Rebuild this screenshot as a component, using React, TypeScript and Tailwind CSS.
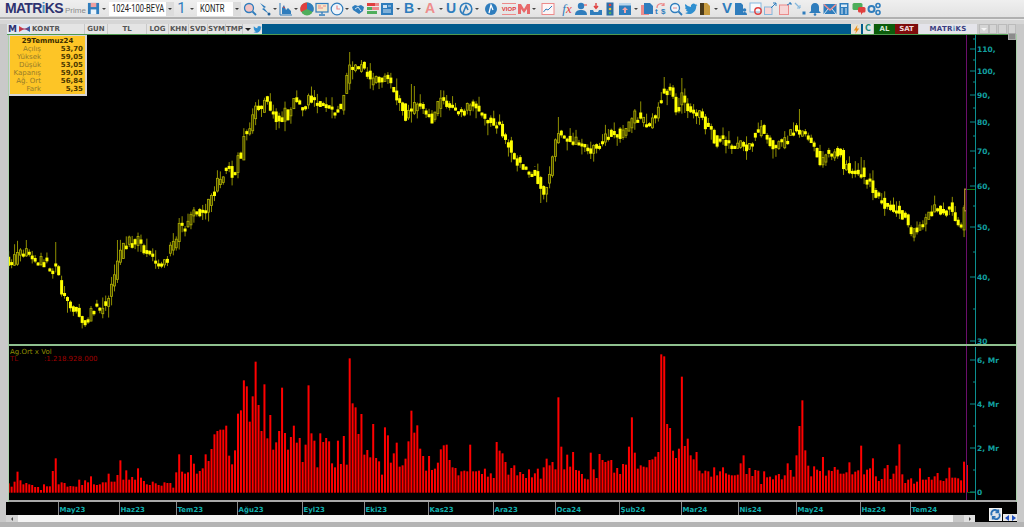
import { ReactNode } from "react"

const crop = (ox: number, oy: number, pts: number[]) => {
  const out: [number, number][] = []
  for (let i = 0; i < pts.length; i += 2) out.push([ox + pts[i] / 3, oy + pts[i + 1] / 3])
  return out
}

// price path traced from the chart
const trace: [number, number][] = [
  ...crop(0, 180, [26,245,40,250,52,215,70,215,90,225,105,240,125,240,140,255,150,275,165,250,175,290,185,330,202,365,218,380,235,400,255,425,270,395,280,380,300,390,320,365,335,325,345,290,352,250,365,210,380,185,400,192,415,180,430,205,445,230,465,245,480,265,492,255,510,210,528,175,540,135,560,140,575,100,590,100,605,105,625,70,645,20,660,0,684,-45,700,-5,720,-90]),
  ...crop(240, 40, [3,345,15,270,30,280,40,220,50,205,60,215,75,175,90,215,105,225,118,240,133,220,148,235,165,165,180,200,195,205,210,170,235,190,260,195,285,215,305,200,320,118,335,75,345,90,365,70,380,100,390,125,405,120,420,130,435,105,455,145,470,175,485,190,497,235,520,200,540,195,560,225,575,240,590,190,610,180,635,190,655,215,670,215,695,185,720,225,745,245,765,255,780,255]),
  ...crop(500, 60, [5,230,22,250,40,280,55,310,75,325,95,345,110,345,120,390,135,395,145,355,157,298,165,255,182,220,205,238,225,235,240,255,262,270,285,265,305,245,320,222,345,215,365,222,385,205,400,165,425,175,445,195,465,170,480,120,495,87,510,95,520,120,530,155,545,110,560,145,580,160,600,165,615,200,635,205,645,250,670,235,700,275,720,255,745,265,770,220]),
  ...crop(760, 90, [5,120,20,145,40,165,70,155,90,135,108,115,125,135,150,145,170,190,180,220,205,195,240,185,250,225,270,240,300,245,330,280,350,315,375,350,400,350,420,370,440,385,455,435,480,405,510,375,530,345,550,380,570,345,590,395,605,420,615,330]),
]

const yAt = (x: number) => {
  if (x <= trace[0][0]) return trace[0][1]
  for (let i = 1; i < trace.length; i++) {
    if (x <= trace[i][0]) {
      const [x0, y0] = trace[i - 1]
      const [x1, y1] = trace[i]
      return y0 + ((y1 - y0) * (x - x0)) / (x1 - x0)
    }
  }
  return trace[trace.length - 1][1]
}

// volume bar tops, read off the lower pane
const volTops = [
  ...[445,455,440,410,436,448,444,448,450,456,456,465,448,454,454,408,370,448,442,444,455,453,454,455,434,450,436,442,424,448,450,448,442,442,416,440,440,420,376,434,406,434,426,434,400,428,438,448,450,440,445,450,452,442,444,444,458,412,358,410,416,412,360,386,416,408,400,358,378,342,298,288,284,284,272,362,388,346,236,226,136,154,260,184,80,210,288,148,310,240,344,322,288,158,294,344,306,272].map((u) => 335 + u / 3),
  ...[278,264,336,284,106,250,272,352,250,276,264,274,340,352,272,342,258,344,25,160,172,252,192,314,300,322,222,324,334,374,232,256,338,310,278,350,346,326,274,182,248,226,296,318,362,318,360,356,338,298,286,284,330,352,354,376,364,362,364,284,364,364,362,372,356,380,370,384,276,302,310,336,374,354,346,376,366,372,384,358,382,370,356,386,352,326,346].map((u) => 350 + u / 3),
  ...[336,358,142,290,358,314,350,306,360,362,372,386,388,308,358,384,312,330,336,332,330,368,354,372,342,344,290,202,308,356,346,350,352,330,328,320,306,13,19,222,234,302,324,296,80,288,266,316,328,306,362,370,362,364,380,352,376,364,352,370,374,376,376,374,340,316,372,354,378,360,362,402,364,382,380,388,376,372,388,376,340,360,380,316,228].map((u) => 350 + u / 3),
  ...[196,346,392,424,394,404,408,366,422,406,408,396,404,416,416,412,382,418,410,406,332,418,404,400,370,424,438,432,400,390,432,416,392,328,418,444,434,430,446,440,400,434,434,426,434,424,414,436,438,430,398,428,428,430,436,380,390].map((u) => 335 + u / 3),
]

const barX = (i: number) => 8.7 + (i * (967 - 8.7)) / (volTops.length - 1)

let seed = 7
const rnd = () => {
  seed = (seed * 16807) % 2147483647
  return seed / 2147483647
}

const tallWicks: [number, number, "h" | "l"][] = [
  [55, 242, "h"], [84, 327, "l"], [118, 240, "h"], [349, 52, "h"], [362, 60, "h"], [411, 84, "h"],
  [414, 86, "h"], [542, 203, "l"], [536, 167, "l"], [558, 117, "h"], [663, 77, "h"], [681, 78, "h"], [799, 109, "h"], [860, 157, "h"],
]

const candles = volTops.map((_, i) => {
  const x = barX(i)
  const open = yAt(x - 2.9) + (rnd() - 0.5) * 9
  const close = yAt(x) + (rnd() - 0.5) * 9
  const top = Math.min(open, close) - rnd() * 1.5
  let bot = Math.max(open, close) + rnd() * 1.5
  if (bot - top < 3) bot = top + 3
  let hi = top - rnd() * rnd() * 14
  let lo = bot + rnd() * rnd() * 12
  for (const [wx, wy, k] of tallWicks) {
    if (Math.abs(wx - x) < 1.5) {
      if (k === "h") hi = wy
      else lo = wy
    }
  }
  // most short rising bars still read as solid yellow in the picture
  return { x, top, bot, hi, lo, up: close < open && bot - top > 5 }
})
candles[candles.length - 1] = { x: 965.5, top: 189, bot: 211, hi: 189, lo: 211, up: true }

const priceTicks: [number, string][] = [
  [49, "110,"], [71, "100,"], [95, "90,"], [122, "80,"], [151, "70,"], [186, "60,"], [227, "50,"], [277, "40,"], [341, "30"],
]
const priceMinor = [39, 60, 82, 108, 136, 168, 206, 252, 309]

const months: [number, string][] = [
  [58, "May23"], [119, "Haz23"], [176, "Tem23"], [237, "Ağu23"], [302, "Eyl23"], [364, "Eki23"], [428, "Kas23"],
  [493, "Ara23"], [555, "Oca24"], [619, "Şub24"], [681, "Mar24"], [738, "Nis24"], [796, "May24"], [860, "Haz24"], [910, "Tem24"],
]

const rows = [
  ["Açılış", "53,70"],
  ["Yüksek", "59,05"],
  ["Düşük", "53,05"],
  ["Kapanış", "59,05"],
  ["Ağ. Ort", "56,84"],
  ["Fark", "5,35"],
]

const BLUE = "#2f7dbd"
const PINK = "#ec8a8a"
const RED = "#e0403f"
const GREEN = "#4fae5c"

const Ic = ({ children }: { children: ReactNode }) => (
  <svg viewBox="0 0 14 14" className="w-[14px] h-[14px]">
    {children}
  </svg>
)

const Letter = ({ c, className }: { c: string; className: string }) => (
  <span className={`w-[14px] h-[14px] flex items-center justify-center font-['Liberation_Sans',sans-serif] font-bold ${className}`}>{c}</span>
)

const Caret = ({ className }: { className: string }) => (
  <span className={`w-[6px] h-[14px] flex items-center justify-center ${className}`}>
    <span className="w-0 h-0 border-x-[2px] border-x-transparent border-t-[2px] border-t-[#444]" />
  </span>
)

const Bird = ({ size = "w-[14px] h-[14px]" }: { size?: string }) => (
  <svg viewBox="0 0 24 24" className={size} fill="#2f8fd0">
    <path d="M23 5c-.8.4-1.700.6-2.600.7.900-.6 1.600-1.400 2-2.500-.9.500-1.900.9-2.900 1.100A4.500 4.500 0 0 0 11.800 8.400C8 8.200 4.600 6.400 2.400 3.600c-1.200 2-.6 4.700 1.400 6-.7 0-1.400-.2-2-.6 0 2.200 1.500 4.100 3.600 4.500-.7.200-1.400.2-2 .1.600 1.800 2.300 3.100 4.200 3.100A9.100 9.100 0 0 1 1 18.600 12.800 12.800 0 0 0 8 20.700c8.400 0 13.200-7.100 12.900-13.500.9-.6 1.600-1.400 2.100-2.200z" />
  </svg>
)

const tools: { node: ReactNode; gap: string }[] = [
  { gap: "ml-[2px]", node: <Ic><circle cx="6" cy="6" r="4.500" fill="#f3c3c3" stroke={BLUE} strokeWidth="1.300" /><path d="M9.500 9.500 13 13" stroke={BLUE} strokeWidth="1.800" /></Ic> },
  { gap: "ml-[1px]", node: <Ic><path d="M2 1l6 4-2 1 5 6-7-5 2-1z" fill={BLUE} /><circle cx="11" cy="12" r="1.500" fill="#1e5f99" /></Ic> },
  { gap: "", node: <Caret className="" /> },
  { gap: "ml-[1px]", node: <Ic><path d="M1 1v12h12" stroke={BLUE} fill="none" /><path d="M3 12V6l2-3 2 5 2-2 3 3v3z" fill={BLUE} /><path d="M4 5l2 1" stroke={RED} /></Ic> },
  { gap: "", node: <Caret className="" /> },
  { gap: "ml-[1px]", node: <Ic><circle cx="7" cy="7" r="6.500" fill={GREEN} /><path d="M7 7V.5A6.500 6.500 0 0 1 13 10z" fill="#2f7dbd" /><path d="M7 7 1 10A6.500 6.500 0 0 1 7 .5z" fill={RED} /></Ic> },
  { gap: "ml-[1px]", node: <Ic><rect x="1" y="1.500" width="12" height="8.500" fill="#f5e6c8" stroke={BLUE} strokeWidth="1.200" /><path d="M3 4h3M3 6h5M8 4h3" stroke={PINK} /><path d="M7 10v2M4 13h6" stroke={BLUE} strokeWidth="1.300" /></Ic> },
  { gap: "ml-[1px]", node: <Ic><circle cx="7" cy="7" r="5.800" fill="#eef5fb" stroke={BLUE} strokeWidth="1.200" /><path d="M7 3.500V7h3" stroke={PINK} strokeWidth="1.200" fill="none" /></Ic> },
  { gap: "", node: <Caret className="" /> },
  { gap: "ml-[1px]", node: <Ic><path d="M1 5l3-2 3 1 3-1 3 2-1 4-4 3-3-2-3-2z" fill={BLUE} /><path d="M4 7l3-2 3 4" stroke="#cfe3f3" fill="none" /></Ic> },
  { gap: "ml-[1px]", node: <Ic><rect x="1" y="1" width="8" height="3" fill={RED} /><rect x="9" y="1" width="4" height="3" fill={PINK} /><rect x="1" y="5" width="5" height="3" fill={GREEN} /><rect x="6" y="5" width="7" height="3" fill={PINK} /><rect x="1" y="9" width="10" height="3" fill={GREEN} /></Ic> },
  { gap: "", node: <Ic><rect x="1" y="1" width="12" height="12" fill={BLUE} /><rect x="3" y="3" width="4" height="3" fill="#cfe3f3" /><path d="M8 4h3M3 8h8M3 10h8" stroke="#cfe3f3" /></Ic> },
  { gap: "ml-[1px]", node: <Caret className="" /> },
  { gap: "ml-[1px]", node: <Letter c="B" className="text-[14px] text-[#2f7dbd]" /> },
  { gap: "", node: <Caret className="" /> },
  { gap: "ml-[1px]", node: <Letter c="A" className="text-[14px] text-[#ee8d8d]" /> },
  { gap: "ml-[1px]", node: <Caret className="" /> },
  { gap: "", node: <Letter c="U" className="text-[14px] text-[#2f7dbd]" /> },
  { gap: "ml-[1px]", node: <Ic><circle cx="7" cy="7" r="5.800" fill="none" stroke={BLUE} strokeWidth="1.600" /><path d="M4 11l3-7 2 4" stroke={BLUE} strokeWidth="1.600" fill="none" /></Ic> },
  { gap: "ml-[1px]", node: <Caret className="" /> },
  { gap: "ml-[4px]", node: <Ic><circle cx="7" cy="7" r="6" fill={BLUE} /><path d="M5 11l2-8 2 5" stroke="#fff" strokeWidth="1.300" fill="none" /></Ic> },
  { gap: "ml-[4px]", node: <span className="w-[14px] h-[12px] mt-[1px] border-y border-[#ec8a8a] flex items-center justify-center font-['Liberation_Sans',sans-serif] font-bold text-[6px] text-[#e0403f]">VIOP</span> },
  { gap: "ml-[1px]", node: <Ic><path d="M1 12V2h3l3 5 3-5h3v10h-3V7L7 11 4 7v5z" fill="#e8696a" /></Ic> },
  { gap: "", node: <Caret className="" /> },
  { gap: "ml-[4px]", node: <Ic><rect x="1" y="1.500" width="12" height="11" fill="#fdf5f5" stroke={PINK} /><path d="M2.500 10 5 7l2 1 4-4" stroke={BLUE} fill="none" /></Ic> },
  { gap: "ml-[5px]", node: <span className="w-[14px] h-[14px] flex items-center justify-center font-['Liberation_Serif',serif] italic text-[13px]"><span className="text-[#2f7dbd]">f</span><span className="text-[#e0403f]">x</span></span> },
  { gap: "", node: <Ic><circle cx="7" cy="4" r="3.200" fill={BLUE} /><path d="M1 13c0-4 3-5 6-5s6 1 6 5z" fill={BLUE} /><path d="M10 3h3" stroke={RED} /></Ic> },
  { gap: "ml-[1px]", node: <Ic><path d="M7 1v5M5 4l2 2.500L9 4" stroke={RED} strokeWidth="1.400" fill="none" /><path d="M1 8h3l1 2h4l1-2h3v5H1z" fill={BLUE} /></Ic> },
  { gap: "", node: <Ic><rect x="3.500" y="0.500" width="7" height="13" fill="#2d6fa8" /><circle cx="7" cy="3" r="1.300" fill={RED} /><circle cx="7" cy="7" r="1.300" fill="#f2c230" /><circle cx="7" cy="11" r="1.300" fill={GREEN} /></Ic> },
  { gap: "ml-[1px]", node: <Ic><rect x="1" y="1" width="12" height="12" fill={BLUE} /><rect x="1" y="1" width="12" height="2.500" fill="#bcd7ec" /><path d="M7 5l3 3H8v3H6V8H4z" fill="#f4a5a5" /></Ic> },
  { gap: "ml-[1px]", node: <Caret className="" /> },
  { gap: "ml-[1px]", node: <Ic><path d="M1 3h8v10H1z" fill={PINK} /><path d="M4 1h6l3 3v8H4z" fill={BLUE} /></Ic> },
  { gap: "", node: <span className="block w-[14px] h-[14px] relative font-['Liberation_Sans',sans-serif] font-bold text-[8px] leading-none"><svg viewBox="0 0 14 14" className="absolute left-0 top-0 w-[14px] h-[14px]"><path d="M3 6a4 4 0 0 1 7-3M10 1v2.500H7.500" stroke={PINK} strokeWidth="1.200" fill="none" /></svg><span className="absolute left-[1px] top-[6px] text-[#2f7dbd]">t</span><span className="absolute left-[7px] top-[6px] text-[#2f7dbd]">$</span></span> },
  { gap: "ml-[1px]", node: <Ic><circle cx="6" cy="6" r="4.500" fill="#eef5fb" stroke={BLUE} strokeWidth="1.300" /><path d="M9.500 9.500 13 13" stroke={BLUE} strokeWidth="1.800" /><path d="M4 6h4" stroke={PINK} /></Ic> },
  { gap: "ml-[1px]", node: <Bird /> },
  { gap: "", node: <Ic><path d="M2 1h7l3 3v9H2z" fill="#c79b3f" /><path d="M2 1h4v12H2z" fill="#4a3a1a" /></Ic> },
  { gap: "ml-[1px]", node: <Caret className="" /> },
  { gap: "ml-[1px]", node: <Letter c="V" className="text-[15px] text-[#2f7dbd]" /> },
  { gap: "", node: <Ic><path d="M1 1h6l2 2v10H1z" fill={BLUE} /><circle cx="10.500" cy="8" r="1.800" fill={BLUE} /><path d="M8 13c0-2 1-3 2.500-3s2.500 1 2.500 3z" fill={BLUE} /></Ic> },
  { gap: "ml-[1px]", node: <Ic><rect x="1" y="1" width="11" height="9" fill="#f6fafd" stroke="#86b8dd" /><circle cx="9" cy="9" r="3.200" fill="none" stroke={RED} strokeWidth="1.400" /></Ic> },
  { gap: "", node: <Ic><rect x="1.500" y="5" width="7.500" height="7.500" fill="#f6d6d6" stroke="#86b8dd" /><path d="M8 6l5-5M10 1h3v3" stroke={BLUE} fill="none" /></Ic> },
  { gap: "ml-[1px]", node: <Ic><rect x="1.500" y="3" width="9" height="9.500" fill="#f6d6d6" stroke={PINK} /><path d="M9 3l4-2" stroke={BLUE} /><path d="M11 1h2v2" stroke={BLUE} fill="none" /></Ic> },
  { gap: "ml-[1px]", node: <Ic><path d="M2 1l5 5" stroke="#86b8dd" strokeWidth="1.200" /><path d="M4 6h3V3" stroke="#86b8dd" fill="none" /><rect x="9.500" y="9.500" width="3" height="3" fill={BLUE} /></Ic> },
  { gap: "ml-[1px]", node: <Ic><path d="M7 1c-2.500 0-4 2-4 4v4l-2 2h12l-2-2V5c0-2-1.500-4-4-4z" fill={BLUE} /><circle cx="7" cy="12.500" r="1.300" fill={BLUE} /></Ic> },
  { gap: "ml-[1px]", node: <Ic><rect x="0.500" y="2" width="13" height="10" fill={BLUE} /><path d="M1 2.500 7 8l6-5.500" stroke="#f08f8f" strokeWidth="1.500" fill="none" /><path d="M1 12l4-5M13 12 9 7" stroke="#cfe3f3" /></Ic> },
  { gap: "", node: <Ic><rect x="2.500" y="1" width="9" height="12" fill={BLUE} /><rect x="4" y="2.500" width="6" height="2.500" fill="#dcebf7" /><path d="M4 7h2M8 7h2M4 9h2M8 9h2M4 11h2M8 11h2" stroke="#dcebf7" /></Ic> },
  { gap: "ml-[1px]", node: <Ic><rect x="0.500" y="1" width="10" height="7" rx="1.500" fill={GREEN} /><rect x="6" y="5" width="7.500" height="5.500" rx="1.500" fill={RED} /><path d="M9 10v3l2-3z" fill={RED} /></Ic> },
  { gap: "ml-[1px]", node: <Ic><circle cx="4.500" cy="7" r="3" fill="none" stroke={BLUE} strokeWidth="2" /><circle cx="11" cy="3.500" r="2" fill="none" stroke={BLUE} strokeWidth="1.600" /><circle cx="11" cy="10.500" r="2" fill="none" stroke={BLUE} strokeWidth="1.600" /></Ic> },
]

const Dropdown = ({ w, text }: { w: string; text: string }) => (
  <div className="flex h-[14px] items-center">
    <div className={`${w} h-[14px] bg-white overflow-hidden pl-[3px] font-['Roboto',sans-serif] text-[10px] leading-[14px] text-[#222]`}>
      <div className="whitespace-nowrap origin-left scale-x-[0.76]">{text}</div>
    </div>
    <div className="w-[8px] h-[14px] bg-[#dcdcdc] flex items-center justify-center">
      <span className="w-0 h-0 border-x-[2px] border-x-transparent border-t-[2px] border-t-[#333]" />
    </div>
  </div>
)

const Toolbar = () => (
  <div className="h-[17px] bg-gradient-to-b from-[#efefef] to-[#e2e2e2] flex items-center pl-[5px] shrink-0">
    <div className="w-[60px] font-['Liberation_Sans',sans-serif] font-bold text-[14px] tracking-[-0.7px] text-[#2e3270] whitespace-nowrap">
      MATR<span className="text-[#4c8ec2]">i</span>KS
    </div>
    <div className="w-[22px] pt-[4px] font-['Liberation_Sans',sans-serif] text-[8px] text-[#8a8a8a]">Prime</div>
    <svg viewBox="0 0 14 14" className="w-[13px] h-[13px]">
      <path d="M1 1h12v12H1z" fill="#2f7dbd" />
      <rect x="4" y="1" width="6" height="4.500" fill="#f0a0a0" />
      <rect x="4" y="8" width="6" height="5" fill="#eaf3fa" />
    </svg>
    <Caret className="ml-[1px]" />
    <div className="w-[2px]" />
    <Dropdown w="w-[57px]" text="1024-100-BEYA" />
    <span className="w-[15px] text-center font-['Roboto',sans-serif] text-[15px] leading-none text-[#2f7dbd]">1</span>
    <Caret className="" />
    <div className="w-[2px]" />
    <Dropdown w="w-[36px]" text="KONTR" />
    {tools.map((t, i) => (
      <div key={i} className={`shrink-0 ${t.gap}`}>
        {t.node}
      </div>
    ))}
  </div>
)

const tabs: [string, string][] = [
  ["GUN", "w-[22px]"],
  ["TL", "w-[38px]"],
  ["LOG", "w-[21px]"],
  ["KHN", "w-[19px]"],
  ["SVD", "w-[18px]"],
  ["SYM", "w-[17px]"],
  ["TMP", "w-[16px]"],
]

const Tab = ({ label, w }: { label: string; w: string }) => (
  <div className={`${w} h-[10px] mr-[1px] bg-[#e4e4e4] text-center text-[7px] leading-[10px] font-bold text-[#555]`}>{label}</div>
)

const TitleBar = () => (
  <div className="h-[10px] flex ml-[7px] mr-[8px] font-['DejaVu_Sans',sans-serif] shrink-0">
    <div className="w-[11px] h-[10px] bg-[#dfe8f2] text-center text-[9px] leading-[10px] font-bold text-[#2e3270]">M</div>
    <svg viewBox="0 0 13 10" className="w-[13px] h-[10px] bg-[#dfe8f2]">
      <path d="M1 2l5 3-5 3z" fill="#d8403f" />
      <path d="M12 2 7 5l5 3z" fill="#2f5fa8" />
      <path d="M2 5h9" stroke="#a03060" />
    </svg>
    <div className="w-[53px] h-[10px] mr-[1px] bg-[#e4e4e4] pl-[1px] text-[7px] leading-[10px] font-bold tracking-[0.2px] text-[#555]">KONTR</div>
    {tabs.map(([l, w]) => (
      <Tab key={l} label={l} w={w} />
    ))}
    <div className="w-[9px] h-[10px] bg-[#e4e4e4] flex items-center justify-center">
      <span className="w-0 h-0 border-x-[3px] border-x-transparent border-t-[3px] border-t-[#222]" />
    </div>
    <div className="w-[10px] h-[10px] bg-[#e4e4e4] flex items-center justify-center">
      <Bird size="w-[9px] h-[9px]" />
    </div>
    <div className="flex-1 bg-[#005a8c]" />
    <div className="w-[10px] h-[10px] bg-[#e4e0d4] flex items-center justify-center">
      <svg viewBox="0 0 10 10" className="w-[9px] h-[9px]">
        <path d="M6 0 2 6h2.500L3.500 10 8 4H5.500z" fill="#e8901c" />
      </svg>
    </div>
    <div className="w-[2px] bg-[#005a8c]" />
    <div className="w-[10px] h-[10px] bg-[#dfe8e4] text-center text-[8px] leading-[10px] font-bold text-[#1f8a7a]">C</div>
    <div className="w-[21px] h-[10px] ml-[1px] bg-[#0b5c0b] text-center text-[7px] leading-[10px] font-bold text-[#d8e8d8]">AL</div>
    <div className="w-[23px] h-[10px] bg-[#7e0c0c] text-center text-[7px] leading-[10px] font-bold text-[#efdada]">SAT</div>
    <div className="w-[58px] h-[10px] ml-[1px] bg-[#e4e4ea] text-center text-[7px] leading-[10px] font-bold tracking-[0.3px] text-[#3a3c80]">
      MATR<span className="text-[#4c8ec2]">i</span>KS
    </div>
    <div className="w-[10px] h-[10px] ml-[2px] bg-[#d4d4d4] border border-[#bbb] flex items-center justify-center">
      <span className="w-0 h-0 border-x-[3px] border-x-transparent border-t-[3px] border-t-[#f4f4f4]" />
    </div>
    <div className="w-[8px] h-[10px] bg-[#d4d4d4] border border-[#bbb]" />
    <div className="w-[9px] h-[10px] ml-[1px] bg-[#d4d4d4] border border-[#bbb]" />
    <div className="w-[8px] h-[10px] ml-[1px] bg-[#d4d4d4] border border-[#bbb]" />
  </div>
)

const InfoBox = () => (
  <div className="absolute left-[8px] top-[35px] w-[79px] h-[61px] bg-[#fdc526] border-2 border-t-[1px] border-[#d6d6d6] font-['DejaVu_Sans',sans-serif] text-[7px] leading-[8px] pt-[1px]">
    <div className="h-[8px] text-center font-bold text-[#3a2c00]">29Temmuz24</div>
    {rows.map(([k, v]) => (
      <div key={k} className="h-[8px] flex">
        <span className="w-[31px] text-right text-[#977c2a] whitespace-nowrap">{k}</span>
        <span className="flex-1 text-right pr-[2px] font-bold text-[#4a3800]">{v}</span>
      </div>
    ))}
  </div>
)

const axisText = { fontFamily: "'DejaVu Sans', sans-serif", fontSize: 7.5 }

const PricePane = () => (
  <svg viewBox="8 35 1008 309" className="w-[1008px] h-[309px] bg-black block">
    {candles.map((c, i) => (
      <g key={i}>
        <line x1={c.x} x2={c.x} y1={c.hi} y2={c.lo} stroke="#8f8f00" strokeWidth="1" />
        {i === candles.length - 1 ? (
          <rect x={c.x - 1} y={c.top} width="2" height={c.bot - c.top} fill="#4a3000" stroke="#a87f30" />
        ) : c.up ? (
          <rect x={c.x - 1} y={c.top} width="2" height={c.bot - c.top} fill="#3a3a00" stroke="#b0b000" strokeWidth="0.800" />
        ) : (
          <rect x={c.x - 1.500} y={c.top} width="3" height={c.bot - c.top} fill="#ffff00" />
        )}
      </g>
    ))}
    <line x1="966.500" x2="966.500" y1="35" y2="344" stroke="#6b0f6b" />
    <line x1="967" x2="975" y1="189.500" y2="189.500" stroke="#0f7a0f" />
    <line x1="975.500" x2="975.500" y1="35" y2="344" stroke="#0b8f8f" />
    {priceTicks.map(([y, t]) => (
      <g key={t}>
        <line x1="970" x2="975" y1={y} y2={y} stroke="#0b8f8f" />
        <text x="977" y={y + 3} fill="#12a0a0" fontWeight="600" style={axisText}>{t}</text>
      </g>
    ))}
    {priceMinor.map((y) => (
      <line key={y} x1="973" x2="975" y1={y} y2={y} stroke="#0b8f8f" />
    ))}
  </svg>
)

const VolumePane = () => (
  <svg viewBox="8 346 1008 154" className="w-[1008px] h-[154px] bg-black block">
    <text x="10" y="354" fill="#8f8f00" style={{ ...axisText, fontSize: 7 }}>Ag.Ort x Vol</text>
    <text x="10" y="361" fill="#8a0000" style={{ ...axisText, fontSize: 7 }}>TL</text>
    <text x="44" y="361" fill="#a00000" style={{ ...axisText, fontSize: 7 }}>:1.218.928.000</text>
    {volTops.map((t, i) => (
      <rect key={i} x={barX(i) - 1} y={t} width="2" height={492.700 - t} fill="#ff0000" />
    ))}
    <line x1="966.500" x2="966.500" y1="346" y2="500" stroke="#6b0f6b" />
    <line x1="967" x2="975" y1="492.500" y2="492.500" stroke="#0f5a0f" />
    <line x1="975.500" x2="975.500" y1="347" y2="500" stroke="#0b8f8f" />
    {[[360, "6, Mr"], [404, "4, Mr"], [448, "2, Mr"], [492, "0"]].map(([y, t]) => (
      <g key={t}>
        <line x1="970" x2="975" y1={Number(y)} y2={Number(y)} stroke="#0b8f8f" />
        <text x="977" y={Number(y) + 3} fill="#12a0a0" fontWeight="600" style={axisText}>{t}</text>
      </g>
    ))}
    {[382, 426, 470].map((y) => (
      <line key={y} x1="973" x2="975" y1={y} y2={y} stroke="#0b8f8f" />
    ))}
  </svg>
)

const DateAxis = () => (
  <svg viewBox="6 502 1011 13" className="w-[1011px] h-[13px] bg-black block">
    {months.map(([x, t]) => (
      <g key={t}>
        <line x1={x + 0.500} x2={x + 0.500} y1="502" y2="515" stroke="#8a8a8a" />
        <text x={x + 1.500} y="512" fill="#12b0b0" fontWeight="600" style={{ ...axisText, fontSize: 7 }}>{t}</text>
      </g>
    ))}
  </svg>
)

const ScrollRow = () => (
  <div className="h-[7px] w-[1011px] ml-[6px] flex bg-black shrink-0">
    <div className="w-[12px] bg-[#d4d4d4] flex items-center justify-center">
      <span className="w-0 h-0 border-y-[2px] border-y-transparent border-r-[2px] border-r-[#444]" />
    </div>
    <div className="w-[935px] bg-[#f4f4f4]" />
    <div className="w-[11px] bg-[#c8c8c8]" />
    <div className="w-[11px] bg-[#e0e0e0] flex items-center justify-center">
      <span className="w-0 h-0 border-y-[2px] border-y-transparent border-l-[2px] border-l-[#444]" />
    </div>
  </div>
)

export default function App() {
  return (
    <div className="relative w-[1024px] h-[527px] flex flex-col bg-[#c9c9c9] overflow-hidden">
      <Toolbar />
      <div className="h-[7px] shrink-0 flex flex-col">
        <div className="h-[2px] bg-[#b0b0b0]" />
        <div className="h-[1px] bg-[#e8e8e8]" />
        <div className="flex-1 bg-[#d6d6d6]" />
      </div>
      <TitleBar />
      <div className="h-[1px] ml-[7px] mr-[8px] bg-[#4f9a4f] shrink-0" />
      <div className="ml-[8px] mr-[8px] flex flex-col shrink-0">
        <PricePane />
        <div className="h-[2px] bg-[#8fc08f]" />
        <VolumePane />
      </div>
      <div className="h-[2px] ml-[8px] mr-[8px] bg-[#a8a8a8] shrink-0" />
      <div className="ml-[6px]">
        <DateAxis />
      </div>
      <ScrollRow />
      <div className="flex-1 bg-[#b4b4b4]" />

      {/* pieces lying over the chart */}
      <InfoBox />
      <div className="absolute left-[1016px] top-[34px] w-[1px] h-[468px] bg-[#a9d0a9]" />
      <div className="absolute left-[8px] top-[35px] w-[1px] h-[467px] bg-[#a9d0a9]" />
      <div className="absolute left-[1008px] top-[33px] w-[8px] h-[7px] bg-[#8c8c8c] border border-[#aaa]" />
      <div className="absolute left-[989px] top-[508px] w-[13px] h-[13px] bg-[#dfe4ea] border border-[#f4f4f4] flex items-center justify-center">
        <svg viewBox="0 0 24 24" className="w-[11px] h-[11px]" fill="none" stroke="#2a6fb5" strokeWidth="4">
          <path d="M4 14a8 8 0 0 1 14-8M20 10a8 8 0 0 1-14 8" />
          <path d="M18 1v6h-6M6 23v-6h6" />
        </svg>
      </div>
      <div className="absolute left-[1003px] top-[514px] w-[14px] h-[7px] flex">
        <div className="w-[7px] h-[7px] bg-[#e8e8e8] flex items-center justify-center">
          <span className="w-0 h-0 border-y-[3px] border-y-transparent border-r-[4px] border-r-[#1f4fc0]" />
        </div>
        <div className="w-[7px] h-[7px] bg-[#e8e8e8] flex items-center justify-center">
          <span className="w-0 h-0 border-y-[3px] border-y-transparent border-l-[4px] border-l-[#1f4fc0]" />
        </div>
      </div>
    </div>
  )
}
